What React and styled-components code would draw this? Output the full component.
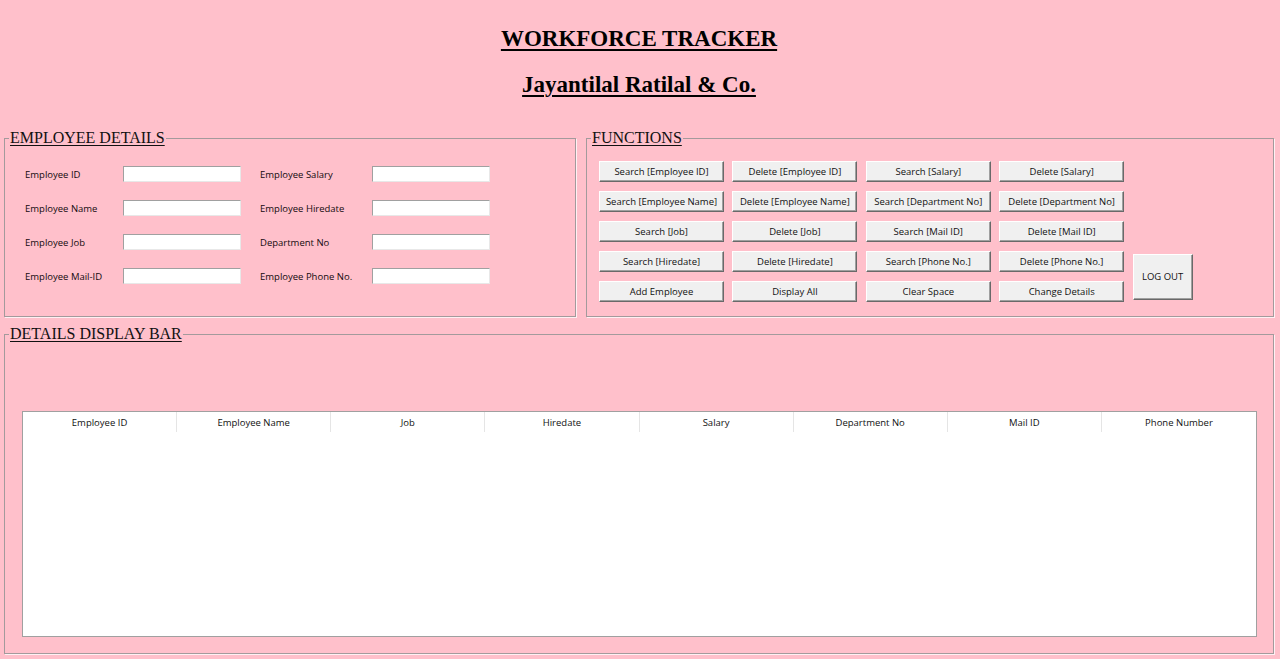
import React from 'react';
import styled, { createGlobalStyle } from 'styled-components';

const Global = createGlobalStyle`
  html, body { margin: 0; padding: 0; background: #ffc0cb; }
  body { width: 1280px; height: 659px; overflow: hidden; }
  #root { height: 659px; }
`;

const uiFont = `"Open Sans", "Noto Sans", "DejaVu Sans", sans-serif`;
const serifFont = `"Liberation Serif", "Times New Roman", serif`;

const Page = styled.div`
  box-sizing: border-box;
  height: 659px;
  padding: 26px 6px 0 4px;
  display: flex;
  flex-direction: column;
  background: #ffc0cb;
`;

const Header = styled.header`
  display: flex;
  flex-direction: column;
  align-items: center;
  gap: 20px;
  margin-bottom: 31px;
`;

const Title = styled.h1`
  margin: 0;
  font-family: ${serifFont};
  font-weight: 700;
  font-size: 23px;
  line-height: 26px;
  color: #000;
  text-decoration: underline;
  text-decoration-thickness: 2px;
  text-underline-offset: 3px;
`;

const TopRow = styled.div`
  display: flex;
  gap: 10px;
  height: 188px;
`;

const Group = styled.fieldset`
  box-sizing: border-box;
  margin: 0;
  padding: 0;
  min-width: 0;
  width: ${p => p.$width};
  height: ${p => p.$height};
  border: 1px solid #a39a9c;
  box-shadow: 1px 1px 0 #fff0f3;
`;

const Legend = styled.legend`
  margin-left: 4px;
  padding: 0 1px;
  font-family: ${serifFont};
  font-size: 16px;
  line-height: 18px;
  color: #111;
  text-decoration: underline;
  text-underline-offset: 2px;
`;

const FormGrid = styled.div`
  display: grid;
  grid-template-columns: auto auto;
  justify-content: start;
  column-gap: 19px;
  row-gap: 18px;
  padding: 19px 0 0 20px;
`;

const Field = styled.label`
  display: flex;
  align-items: center;
  height: 16px;
`;

const FieldLabel = styled.span`
  width: ${p => p.$w}px;
  font-family: ${uiFont};
  font-size: 9.5px;
  color: #140a0e;
  white-space: nowrap;
`;

const Entry = styled.input`
  box-sizing: border-box;
  width: 118px;
  height: 16px;
  margin: 0;
  padding: 0 2px;
  background: #fff;
  border-style: solid;
  border-width: 1px;
  border-color: #a0a0a0 #e8e8e8 #e8e8e8 #a0a0a0;
  outline: none;
  font-family: ${uiFont};
  font-size: 9.5px;
`;

const ButtonGrid = styled.div`
  display: grid;
  grid-template-columns: repeat(4, 125px) 60px;
  grid-auto-rows: 21px;
  column-gap: 8.4px;
  row-gap: 9px;
  padding: 14px 0 0 12px;
`;

const Btn = styled.button`
  box-sizing: border-box;
  margin: 0;
  padding: 0;
  grid-column: ${p => p.$col || 'auto'};
  background: #f0f0f0;
  border-style: solid;
  border-width: 1px;
  border-color: #ffffff #696969 #696969 #ffffff;
  box-shadow: inset -1px -1px 0 #a0a0a0;
  font-family: ${uiFont};
  font-size: 9.5px;
  color: #111;
  white-space: nowrap;
  cursor: pointer;
`;

const LogOut = styled(Btn)`
  grid-column: 5;
  grid-row: 4 / span 2;
  align-self: center;
  height: 46px;
`;

const BottomGroupWrap = styled.div`
  margin-top: 8px;
`;

const TableArea = styled.div`
  padding: 68px 0 0 17px;
`;

const Table = styled.div`
  box-sizing: border-box;
  width: 1235px;
  height: 226px;
  background: #fff;
  border: 1px solid #a0a0a0;
`;

const HeadRow = styled.div`
  display: grid;
  grid-template-columns: repeat(8, 1fr);
  height: 20px;
`;

const HeadCell = styled.div`
  display: flex;
  align-items: center;
  justify-content: center;
  font-family: ${uiFont};
  font-size: 9.5px;
  color: #111;
  border-right: 1px solid #e5e5e5;
  &:last-child { border-right: none; }
`;

const fieldsLeft = ['Employee ID', 'Employee Name', 'Employee Job', 'Employee Mail-ID'];
const fieldsRight = ['Employee Salary', 'Employee Hiredate', 'Department No', 'Employee Phone No.'];

const buttons = [
  ['Search [Employee ID]', 'Delete [Employee ID]', 'Search [Salary]', 'Delete [Salary]'],
  ['Search [Employee Name]', 'Delete [Employee Name]', 'Search [Department No]', 'Delete [Department No]'],
  ['Search [Job]', 'Delete [Job]', 'Search [Mail ID]', 'Delete [Mail ID]'],
  ['Search [Hiredate]', 'Delete [Hiredate]', 'Search [Phone No.]', 'Delete [Phone No.]'],
  ['Add Employee', 'Display All', 'Clear Space', 'Change Details'],
];

const columns = ['Employee ID', 'Employee Name', 'Job', 'Hiredate', 'Salary', 'Department No', 'Mail ID', 'Phone Number'];

export default function App() {
  return (
    <>
      <Global />
      <Page>
        <Header>
          <Title>WORKFORCE TRACKER</Title>
          <Title>Jayantilal Ratilal &amp; Co.</Title>
        </Header>
        <TopRow>
          <Group $width="572px" $height="188px">
            <Legend>EMPLOYEE DETAILS</Legend>
            <FormGrid>
              {fieldsLeft.map((l, i) => (
                <React.Fragment key={l}>
                  <Field>
                    <FieldLabel $w={98}>{l}</FieldLabel>
                    <Entry />
                  </Field>
                  <Field>
                    <FieldLabel $w={112}>{fieldsRight[i]}</FieldLabel>
                    <Entry />
                  </Field>
                </React.Fragment>
              ))}
            </FormGrid>
          </Group>
          <Group $width="688px" $height="188px">
            <Legend>FUNCTIONS</Legend>
            <ButtonGrid>
              {buttons.map(row =>
                row.map((b, c) => (
                  <Btn key={b} $col={c + 1}>{b}</Btn>
                ))
              )}
              <LogOut>LOG OUT</LogOut>
            </ButtonGrid>
          </Group>
        </TopRow>
        <BottomGroupWrap>
          <Group $width="1270px" $height="329px">
            <Legend>DETAILS DISPLAY BAR</Legend>
            <TableArea>
              <Table>
                <HeadRow>
                  {columns.map(c => (
                    <HeadCell key={c}>{c}</HeadCell>
                  ))}
                </HeadRow>
              </Table>
            </TableArea>
          </Group>
        </BottomGroupWrap>
      </Page>
    </>
  );
}
